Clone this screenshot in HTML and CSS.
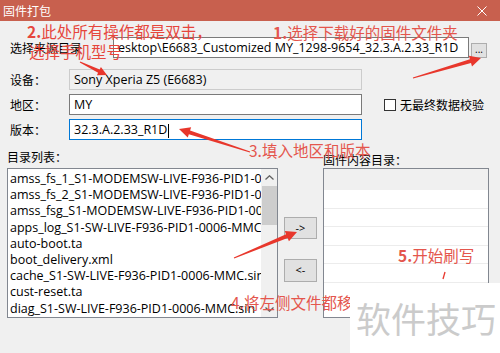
FILE: index.html
```html
<!DOCTYPE html>
<html lang="zh-CN">
<head>
    <meta charset="UTF-8">
    <title>固件打包</title>
    <link rel="stylesheet" href="styles.css">
</head>
<body>
    <div class="window">
        <div class="titlebar">
            <span>固件打包</span>
            <svg class="close" width="10" height="10" viewBox="0 0 10 10">
                <path d="M0.5 0.5 L9.5 9.5 M9.5 0.5 L0.5 9.5" stroke="#fff" stroke-width="1"/>
            </svg>
        </div>

        <div class="form">
            <!-- 来源目录 -->
            <div class="row-src">
                <span class="label-src">选择来源目录</span>
                <div class="field field-src">esktop\E6683_Customized MY_1298-9654_32.3.A.2.33_R1D</div>
                <div class="btn-browse">...</div>
            </div>

            <div class="row row-first">
                <span class="label">设备：</span>
                <div class="field field-main readonly">Sony Xperia Z5 (E6683)</div>
            </div>
            <div class="row">
                <span class="label">地区：</span>
                <div class="field field-main">MY</div>
                <label class="check"><span class="box"></span>无最终数据校验</label>
            </div>
            <div class="row">
                <span class="label">版本：</span>
                <div class="field field-main focused">32.3.A.2.33_R1D<span class="caret"></span></div>
            </div>

            <div class="lower">
                <div class="cap">目录列表：</div>
                <div></div>
                <div class="cap cap-right">固件内容目录：</div>

                <div class="list">
                    <div class="items">
                        <div>amss_fs_1_S1-MODEMSW-LIVE-F936-PID1-0006-MMC.sin</div>
                        <div>amss_fs_2_S1-MODEMSW-LIVE-F936-PID1-0006-MMC.sin</div>
                        <div>amss_fsg_S1-MODEMSW-LIVE-F936-PID1-0006-MMC.sin</div>
                        <div>apps_log_S1-SW-LIVE-F936-PID1-0006-MMC.sin</div>
                        <div>auto-boot.ta</div>
                        <div>boot_delivery.xml</div>
                        <div>cache_S1-SW-LIVE-F936-PID1-0006-MMC.sin</div>
                        <div>cust-reset.ta</div>
                        <div>diag_S1-SW-LIVE-F936-PID1-0006-MMC.sin</div>
                    </div>
                    <div class="scrollbar">
                        <svg class="chev" width="9" height="5" viewBox="0 0 9 5">
                            <path d="M0.5 4.5 L4.5 0.8 L8.5 4.5" stroke="#606060" stroke-width="1.3" fill="none"/>
                        </svg>
                        <div class="thumb"></div>
                        <svg class="chev chev-down" width="9" height="5" viewBox="0 0 9 5">
                            <path d="M0.5 0.5 L4.5 4.2 L8.5 0.5" stroke="#606060" stroke-width="1.3" fill="none"/>
                        </svg>
                    </div>
                </div>

                <div class="movers">
                    <div class="btn btn-add">-&gt;</div>
                    <div class="btn btn-remove">&lt;-</div>
                </div>

                <div class="target">
                    <div class="target-head"></div>
                    <div class="target-row"></div>
                    <div class="target-row"></div>
                    <div class="target-row"></div>
                    <div class="target-row"></div>
                    <div class="target-row"></div>
                    <div class="target-row"></div>
                </div>
            </div>
        </div>

        <!-- 标注 -->
        <span class="note note-2"><b>2.</b>此处所有操作都是双击，</span>
        <span class="note note-2b">选择手机型号</span>
        <span class="note note-1"><b>1.</b>选择下载好的固件文件夹</span>
        <span class="note note-3">3.填入地区和版本</span>
        <span class="note note-4">4.将左侧文件都移</span>
        <span class="note note-5"><b>5.</b>开始刷写</span>

        <svg class="arrows" width="500" height="353" viewBox="0 0 500 353">
            <g fill="#e8372c">
                <polygon points="413.14,78.48 471,63 472,66.4 481,58 468.9,55.8 469.9,59.2 412.86,77.52"/>
                <polygon points="79.78,62.45 98.1,72.7 96.9,75.2 107,75 100.9,67 99.7,69.5 80.22,61.55"/>
                <polygon points="250.15,151.52 190.08,130.49 191.15,127.16 179,129 187.77,137.62 188.84,134.29 249.85,152.48"/>
                <polygon points="234.19,258.46 287.6,238.05 288.94,241.28 297,232 284.74,231.12 286.08,234.35 233.81,257.54"/>
            </g>
            <line x1="445" y1="272" x2="443" y2="279" stroke="#e8372c" stroke-width="1.3"/>
        </svg>

        <div class="watermark">软件技巧</div>
    </div>
</body>
</html>
```

FILE: styles.css
```css
body {
    margin: 0;
}
.window {
    position: relative;
    width: 500px;
    height: 353px;
    overflow: hidden;
    background: #f0f0f0;
    font-family: "Open Sans", "Noto Sans CJK SC", sans-serif;
    font-size: 12px;
    color: #000;
}
.titlebar {
    height: 21px;
    background: #c8604e;
    color: #fff;
    display: flex;
    align-items: center;
    justify-content: space-between;
    padding: 0 13px 0 3px;
    font-family: "Noto Sans CJK SC", sans-serif;
}
.form {
    padding: 16px 0 0 10px;
}
.row-src {
    display: flex;
    align-items: flex-end;
    height: 21px;
}
.label-src {
    width: 103px;
    align-self: center;
}
.field {
    box-sizing: border-box;
    height: 21px;
    border: 1px solid #7a7a7a;
    background: #fff;
    padding: 0 4px;
    line-height: 19px;
    font-size: 12.5px;
    white-space: nowrap;
    overflow: hidden;
}
.field-src {
    width: 356px;
}
.btn-browse {
    box-sizing: border-box;
    width: 16px;
    height: 15px;
    margin-left: 2px;
    background: #e1e1e1;
    border: 1px solid #adadad;
    font-size: 10px;
    line-height: 10px;
    text-align: center;
}
.row {
    display: flex;
    align-items: center;
    margin-top: 4px;
}
.row-first {
    margin-top: 11px;
}
.label {
    width: 59px;
    font-family: "Noto Sans CJK SC", sans-serif;
}
.field-main {
    width: 293px;
}
.readonly {
    background: #f0f0f0;
    border-color: #cccccc;
}
.focused {
    border-color: #0078d7;
}
.caret {
    display: inline-block;
    width: 1px;
    height: 14px;
    background: #000;
    vertical-align: middle;
    margin-left: 1px;
}
.check {
    display: flex;
    align-items: center;
    margin-left: 22px;
    font-family: "Noto Sans CJK SC", sans-serif;
}
.box {
    box-sizing: border-box;
    width: 12px;
    height: 12px;
    border: 1px solid #333;
    background: #fff;
    margin-right: 4px;
}
.lower {
    display: grid;
    grid-template-columns: 271px 45px 166px;
    grid-template-rows: 18px 150px;
    margin: 10px 0 0 -3px;
}
.cap {
    font-family: "Noto Sans CJK SC", sans-serif;
    line-height: 14px;
}
.cap-right {
    padding-top: 3px;
}
.list {
    box-sizing: border-box;
    display: flex;
    border: 1px solid #828790;
    background: #fff;
}
.items {
    flex: 1;
    overflow: hidden;
    padding: 2px 0 0 2px;
    font-size: 12.5px;
    line-height: 16.2px;
    white-space: nowrap;
}
.scrollbar {
    width: 16px;
    display: flex;
    flex-direction: column;
    align-items: center;
    background: #f0f0f0;
}
.chev {
    margin-top: 6px;
}
.chev-down {
    margin: auto 0 5px;
}
.thumb {
    width: 15px;
    height: 39px;
    background: #cdcdcd;
    margin-top: 6px;
}
.movers {
    display: flex;
    flex-direction: column;
    align-items: center;
}
.btn {
    box-sizing: border-box;
    width: 33px;
    height: 22px;
    background: #e1e1e1;
    border: 1px solid #adadad;
    text-align: center;
    line-height: 19px;
    font-size: 11px;
}
.btn-add {
    margin-top: 49px;
}
.btn-remove {
    margin-top: 20px;
    height: 23px;
}
.target {
    box-sizing: border-box;
    border: 1px solid #828790;
    background: #fff;
}
.target-head {
    height: 21px;
    background: #f0f0f0;
}
.target-row {
    height: 18.5px;
    box-sizing: border-box;
    border-bottom: 1px solid #ececec;
}
.note {
    position: absolute;
    color: #e6463c;
    font-family: "Noto Sans CJK SC", sans-serif;
    font-size: 15.5px;
    line-height: 18px;
    white-space: nowrap;
}
.note b {
    font-weight: 700;
}
.note-2 {
    left: 27px;
    top: 22px;
}
.note-2b {
    left: 29px;
    top: 42px;
}
.note-1 {
    left: 273px;
    top: 23px;
    color: #e4564d;
}
.note-3 {
    left: 249px;
    top: 141px;
    color: #e4564d;
}
.note-4 {
    left: 231px;
    top: 293px;
    color: #e4564d;
}
.note-5 {
    left: 398px;
    top: 246px;
    color: #e4564d;
}
.arrows {
    position: absolute;
    left: 0;
    top: 0;
    pointer-events: none;
}
.watermark {
    position: absolute;
    left: 350px;
    top: 283px;
    width: 150px;
    height: 70px;
    background: #fff;
    color: #cbcbcb;
    font-family: "Noto Sans CJK SC", sans-serif;
    font-size: 35px;
    line-height: 70px;
    padding-left: 6px;
    box-sizing: border-box;
    white-space: nowrap;
}
```
